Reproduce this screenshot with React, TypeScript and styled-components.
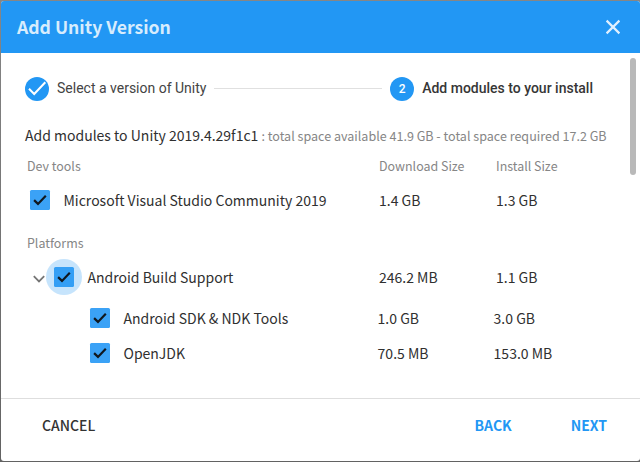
import React from 'react';
import styled, { createGlobalStyle } from 'styled-components';

const GlobalStyle = createGlobalStyle`
  * { box-sizing: border-box; }
  body {
    margin: 0;
    background: #747474;
    font-family: "Noto Sans CJK SC", "Noto Sans", sans-serif;
    font-size: 14px;
    color: #303030;
  }
`;

const Backdrop = styled.div`
  height: 462px;
  padding: 1px 0 1px 1px;
  overflow: hidden;
  background: linear-gradient(#868686, #626262);
`;

const Dialog = styled.section`
  display: flex;
  flex-direction: column;
  height: 460px;
  background: #fff;
  border-radius: 3px;
  overflow: hidden;
`;

const Header = styled.header`
  display: flex;
  align-items: center;
  justify-content: space-between;
  height: 52px;
  flex: none;
  padding: 0 19px 0 16px;
  background: #2297f4;
`;

const Title = styled.h1`
  margin: 0;
  font-size: 17.6px;
  font-weight: 700;
  line-height: 24px;
  color: #d7ecfd;
`;

const IconButton = styled.button`
  display: flex;
  padding: 0;
  border: 0;
  background: none;
`;

const Body = styled.main`
  display: flex;
  justify-content: space-between;
  height: 345px;
  flex: none;
  padding-right: 4px;
`;

const Content = styled.div`
  width: 612px;
  padding: 24px 0 0 24px;
`;

const ScrollThumb = styled.div`
  width: 6px;
  height: 117px;
  margin-top: 5px;
  border-radius: 3px;
  background: #b9b9b9;
`;

const Stepper = styled.div`
  display: flex;
  align-items: center;
  height: 24px;
  width: 568px;
  font-family: Roboto, sans-serif;
`;

const StepBadge = styled.span`
  display: flex;
  align-items: center;
  justify-content: center;
  width: 24px;
  height: 24px;
  flex: none;
  margin-right: 8px;
  border-radius: 50%;
  background: #2297f4;
  color: #fff;
  font-size: 12px;
  font-weight: 500;
`;

const StepLabel = styled.span<{ $active?: boolean }>`
  font-weight: ${(p) => (p.$active ? 500 : 400)};
  line-height: 22px;
  margin-bottom: 2px;
  white-space: nowrap;
  color: ${(p) => (p.$active ? '#363636' : '#444')};
`;

const StepLine = styled.span`
  flex: 1;
  height: 1px;
  margin: 0 8px 1px;
  background: #e0e0e0;
`;

const Heading = styled.h2`
  margin: 23px 0 0;
  font-size: 14px;
  font-weight: 400;
  line-height: 22px;
  white-space: nowrap;
`;

const Space = styled.span`
  font-size: 12.55px;
  color: #868686;
`;

const columns = '117px 1fr';

const SectionRow = styled.div<{ $top: number }>`
  display: grid;
  grid-template-columns: 352px ${columns};
  margin-top: ${(p) => p.$top}px;
  padding-left: 2px;
  font-size: 12.45px;
  line-height: 20px;
  color: #868686;
`;

const ModuleRow = styled.div<{ $top: number; $nested?: boolean }>`
  display: grid;
  grid-template-columns: ${(p) => (p.$nested ? '352.6px 116px 1fr' : `354px ${columns}`)};
  align-items: center;
  height: 20px;
  margin-top: ${(p) => p.$top}px;
  white-space: nowrap;
`;

const ModuleName = styled.div<{ $indent: number }>`
  display: flex;
  align-items: center;
  gap: 13.5px;
  padding-left: ${(p) => p.$indent}px;
`;

const Label = styled.span`
  line-height: 20px;
`;

const Box = styled.span<{ $focused?: boolean }>`
  display: flex;
  align-items: center;
  justify-content: center;
  width: 20px;
  height: 20px;
  flex: none;
  position: relative;
  border-radius: 1.5px;
  background: #3ba2f6;

  &::before {
    content: "";
    display: ${(p) => (p.$focused ? 'block' : 'none')};
    position: absolute;
    inset: -8px;
    border-radius: 50%;
    background: rgba(34, 151, 244, 0.26);
  }

  svg { position: relative; }
`;

const Expander = styled.span`
  display: flex;
  width: 12px;
  height: 8px;
  margin: 4px -4.5px 0 0;
`;

const Footer = styled.footer`
  display: flex;
  align-items: center;
  flex: 1;
  padding: 0 33px 10px 41px;
  border-top: 1px solid #dedede;
`;

const Action = styled.button<{ $primary?: boolean }>`
  padding: 0;
  border: 0;
  background: none;
  font: 500 14px/24px "Noto Sans CJK SC", sans-serif;
  color: ${(p) => (p.$primary ? '#2297f4' : '#333')};
  font-weight: ${(p) => (p.$primary ? 700 : 500)};
  & + & { margin-left: 59px; }
  &:first-child { margin-right: auto; }
  &:nth-child(2) { margin-left: 0; }
`;

function Checkbox({ focused }: { focused?: boolean }) {
  return (
    <Box $focused={focused} role="checkbox" aria-checked="true">
      <svg width="20" height="20" viewBox="0 0 20 20" fill="none" stroke="#101820" strokeWidth="2.2">
        <path d="M4.1 10.1 8 13.9 15.8 5.8" />
      </svg>
    </Box>
  );
}

export default function App() {
  return (
    <>
      <GlobalStyle />
      <Backdrop>
        <Dialog>
          <Header>
            <Title>Add Unity Version</Title>
            <IconButton aria-label="Close">
              <svg width="16" height="16" viewBox="0 0 16 16" stroke="#e0f0fe" strokeWidth="2.2">
                <path d="M1.6 1.6 14.4 14.4M14.4 1.6 1.6 14.4" />
              </svg>
            </IconButton>
          </Header>
          <Body>
            <Content>
              <Stepper>
                <StepBadge>
                  <svg width="24" height="24" viewBox="0 0 24 24" fill="none" stroke="#fff" strokeWidth="2">
                    <path d="M4 11.8 9.2 17 20.3 5.3" />
                  </svg>
                </StepBadge>
                <StepLabel>Select a version of Unity</StepLabel>
                <StepLine />
                <StepBadge>2</StepBadge>
                <StepLabel $active>Add modules to your install</StepLabel>
              </Stepper>
              <Heading>
                Add modules to Unity 2019.4.29f1c1 <Space>: total space available 41.9 GB - total space required 17.2 GB</Space>
              </Heading>
              <SectionRow $top={9}>
                <span>Dev tools</span>
                <span>Download Size</span>
                <span>Install Size</span>
              </SectionRow>
              <ModuleRow $top={14}>
                <ModuleName $indent={5}><Checkbox /><Label>Microsoft Visual Studio Community 2019</Label></ModuleName>
                <Label>1.4 GB</Label>
                <Label>1.3 GB</Label>
              </ModuleRow>
              <SectionRow $top={23}>
                <span>Platforms</span>
              </SectionRow>
              <ModuleRow $top={14}>
                <ModuleName $indent={8}>
                  <Expander>
                    <svg width="12" height="8" viewBox="0 0 12 8" fill="none" stroke="#757575" strokeWidth="1.8">
                      <path d="M.8 1.2 6 6.4 11.2 1.2" />
                    </svg>
                  </Expander>
                  <Checkbox focused />
                  <Label>Android Build Support</Label>
                </ModuleName>
                <Label>246.2 MB</Label>
                <Label>1.1 GB</Label>
              </ModuleRow>
              <ModuleRow $top={21} $nested>
                <ModuleName $indent={65}><Checkbox /><Label>Android SDK &amp; NDK Tools</Label></ModuleName>
                <Label>1.0 GB</Label>
                <Label>3.0 GB</Label>
              </ModuleRow>
              <ModuleRow $top={15} $nested>
                <ModuleName $indent={65}><Checkbox /><Label>OpenJDK</Label></ModuleName>
                <Label>70.5 MB</Label>
                <Label>153.0 MB</Label>
              </ModuleRow>
            </Content>
            <ScrollThumb />
          </Body>
          <Footer>
            <Action>CANCEL</Action>
            <Action $primary>BACK</Action>
            <Action $primary>NEXT</Action>
          </Footer>
        </Dialog>
      </Backdrop>
    </>
  );
}
